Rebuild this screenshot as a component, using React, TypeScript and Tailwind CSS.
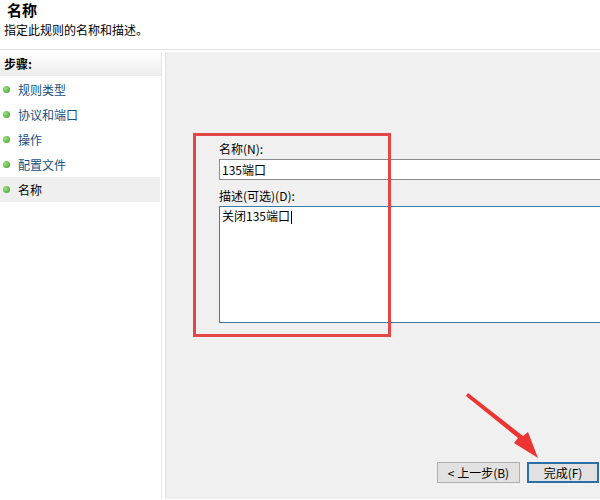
import React from "react";

const steps = ["规则类型", "协议和端口", "操作", "配置文件", "名称"];

const Dot = () => (
  <span className="inline-block w-[7px] h-[7px] rounded-full bg-[radial-gradient(circle_at_35%_35%,#9be27a,#3c9a2a)]" />
);

export default function App() {
  return (
    <div className="relative w-[600px] h-[500px] overflow-hidden bg-white text-[12px] text-black font-['Noto_Sans_CJK_SC','Liberation_Sans',sans-serif]">
      {/* header */}
      <div className="h-[50px] pl-[7px] pt-[1px] border-b border-[#e3e3e3]">
        <div className="text-[15px] font-bold leading-[18px]">名称</div>
        <div className="mt-[3px] -ml-[3px] text-[12px] leading-[16px]">指定此规则的名称和描述。</div>
      </div>

      <div className="flex h-[449px] pt-[2px]">
        {/* steps */}
        <div className="w-[162px] border-r border-[#e6e6e6] shrink-0">
          <div className="h-[24px] flex items-center pl-[4px] font-bold text-[12px] bg-gradient-to-b from-white to-[#ececec]">
            步骤:
          </div>
          <div className="pt-[1px]">
            {steps.map((s, i) => (
              <div
                key={s}
                className={`h-[25px] flex items-center gap-[8px] pl-[3px] mr-[1px] ${
                  i === steps.length - 1 ? "bg-[#efefef] text-black" : "text-[#17507f]"
                }`}
              >
                <Dot />
                <span>{s}</span>
              </div>
            ))}
          </div>
        </div>
        <div className="w-[3px] shrink-0" />
        {/* form panel */}
        <div className="flex-1 bg-[#f0f0f0] border-l border-[#e2e2e2] overflow-hidden relative">
          <div className="pl-[53px] pt-[89px]">
            <div className="leading-[16px]">名称(N):</div>
            <div className="mt-[2px] w-[420px] h-[21px] bg-white border border-[#8a8a8a] px-[2px] flex items-center">
              135端口
            </div>
            <div className="mt-[8px] leading-[16px]">描述(可选)(D):</div>
            <div className="mt-[2px] w-[420px] h-[117px] bg-white border border-[#3a7ca5] px-[2px] pt-[1px] leading-[16px]">
              关闭135端口<span className="inline-block w-px h-[13px] bg-black align-middle ml-px" />
            </div>
          </div>
          <div className="absolute left-[271px] top-[410px] flex gap-[7px]">
            <button className="w-[83px] h-[21px] bg-[#e1e1e1] border border-[#adadad] text-[12px] flex items-center justify-center">
              &lt; 上一步(B)
            </button>
            <button className="w-[72px] h-[21px] bg-[#e1e1e1] border-2 border-[#2c6fa6] text-[12px] flex items-center justify-center">
              完成(F)
            </button>
          </div>
        </div>
      </div>

      {/* annotations */}
      <div className="absolute left-[193px] top-[133px] w-[198px] h-[204px] border-[3px] border-[#e24646] pointer-events-none" />
      <svg className="absolute left-0 top-0 pointer-events-none" width="600" height="500">
        <path d="M466 396 L518 438 L514 443 L538 458 L528 432 L523 436 L468 393 Z" fill="#ee3333" />
      </svg>
    </div>
  );
}
